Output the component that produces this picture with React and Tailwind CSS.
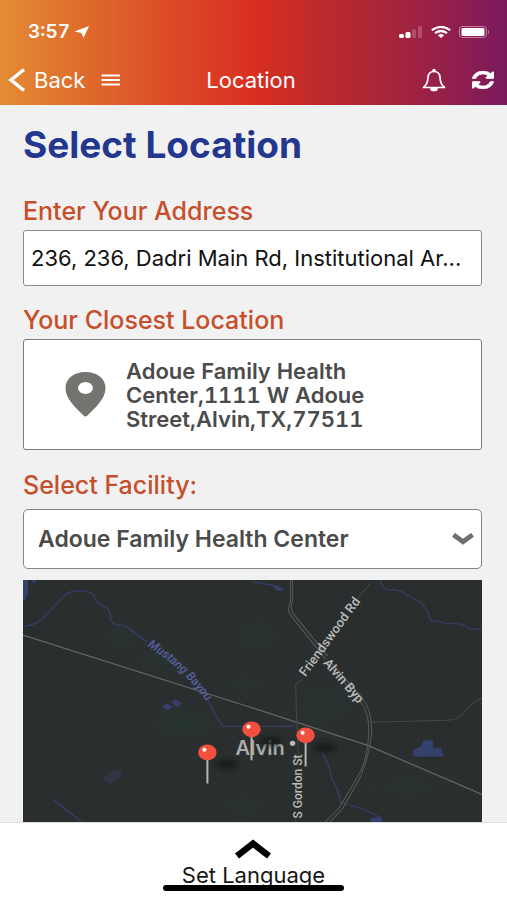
import React from "react";

const PINS = [
  { x: 184, y: 172 },
  { x: 228, y: 149 },
  { x: 282, y: 155 },
];

function StatusBar() {
  return (
    <div className="flex h-8 items-center justify-between pl-7 pr-4">
      <div className="flex items-center gap-1 text-[19px] font-semibold leading-6">
        <span className="tabular-nums">3:57</span>
        <svg className="h-3 w-4" viewBox="0 0 16 12" fill="currentColor" aria-hidden="true">
          <path d="M15 0 L9.5 12 L7.5 7 L0.500 5.500 Z" />
        </svg>
      </div>
      <div className="flex items-center gap-2">
        <svg className="h-3 w-6" viewBox="0 0 24 12" fill="currentColor" aria-hidden="true">
          <rect x="0" y="8" width="5" height="4" rx="1.500" />
          <rect x="6.500" y="6" width="5" height="6" rx="1.500" />
          <rect x="13" y="3" width="4" height="9" rx="1.500" opacity="0.200" />
          <rect x="19" y="0" width="4" height="12" rx="1.500" opacity="0.200" />
        </svg>
        <svg className="h-3 w-5" viewBox="0 0 20 12" fill="none" stroke="currentColor" aria-hidden="true">
          <path d="M0.800 4.200 Q10 -2.400 19.200 4.200" strokeWidth="2.200" />
          <path d="M4 7.200 Q10 2.800 16 7.200" strokeWidth="2.200" />
          <path d="M6.800 9.200 Q10 7 13.200 9.200 L10 12 Z" fill="currentColor" stroke="none" />
        </svg>
        <svg className="h-3 w-8" viewBox="0 0 32 12" fill="none" aria-hidden="true">
          <rect x="0.500" y="0.500" width="27" height="11" rx="3" stroke="currentColor" opacity="0.450" />
          <rect x="2.500" y="2" width="23" height="8" rx="1.500" fill="currentColor" />
          <path d="M29 4 Q31 6 29 8 Z" fill="currentColor" opacity="0.450" />
        </svg>
      </div>
    </div>
  );
}

function Header() {
  return (
    <header className="h-[105px] bg-[linear-gradient(90deg,#e48b34_0%,#df6c2c_16%,#dc4a27_34%,#da2e22_50%,#bf2a29_62%,#a5253c_78%,#8c1d50_92%,#7a1a5e_100%)] pt-4 text-white">
      <StatusBar />
      <div className="grid h-16 grid-cols-3 items-center pl-2 pr-[13px]">
        <div className="flex items-center gap-4">
          <button type="button" className="flex items-center gap-2 text-[22px] leading-6">
            <svg className="h-6 w-[18px]" viewBox="0 0 18 24" fill="none" stroke="currentColor" strokeWidth="3.500" aria-hidden="true">
              <path d="M16 1.500 L3 12 L16 22.500" />
            </svg>
            Back
          </button>
          <button type="button" aria-label="Menu">
            <svg className="h-3 w-5" viewBox="0 0 20 12" stroke="currentColor" strokeWidth="1.800" aria-hidden="true">
              <path d="M0.500 1.500H19M0.500 6H19M0.500 10.500H19" />
            </svg>
          </button>
        </div>
        <h1 className="text-center text-[22px] leading-6">Location</h1>
        <div className="flex items-center justify-end gap-[26px]">
          <button type="button" aria-label="Notifications">
            <svg className="h-6 w-6" viewBox="0 0 24 24" fill="none" stroke="currentColor" strokeWidth="1.700" strokeLinejoin="round" aria-hidden="true">
              <path d="M12 3.500C8.400 3.500 6.200 5.800 6 9.500C5.800 14.800 4.600 17 1.500 19.500H22.500C19.400 17 18.200 14.800 18 9.500C17.800 5.800 15.600 3.500 12 3.500Z" />
              <circle cx="12" cy="2.500" r="0.900" />
              <path d="M9 20.400A3 2 0 0 0 15 20.400Z" fill="currentColor" />
            </svg>
          </button>
          <button type="button" aria-label="Refresh">
            <svg className="h-[18px] w-[22px]" viewBox="0 0 1536 1536" preserveAspectRatio="none" fill="currentColor" stroke="currentColor" strokeWidth="50" aria-hidden="true">
              <path d="M1511 928q0 5-1 7-64 268-268 434.500t-478 166.500q-146 0-282.500-55t-243.500-157l-129 129q-19 19-45 19t-45-19-19-45v-448q0-26 19-45t45-19h448q26 0 45 19t19 45-19 45l-137 137q71 66 161 102t187 36q134 0 250-65t186-179q11-17 53-117 8-23 30-23h192q13 0 22.500 9.500t9.500 22.500zm25-800v448q0 26-19 45t-45 19h-448q-26 0-45-19t-19-45 19-45l138-138q-148-137-349-137-134 0-250 65t-186 179q-11 17-53 117-8 23-30 23h-199q-13 0-22.500-9.500t-9.500-22.500v-7q65-268 270-434.500t480-166.500q146 0 284 55.500t245 156.500l130-129q19-19 45-19t45 19 19 45z" />
            </svg>
          </button>
        </div>
      </div>
    </header>
  );
}

function Pin({ x, y }) {
  return (
    <g>
      <ellipse cx={x + 19} cy={y + 12} rx="11" ry="5" fill="#151718" opacity="0.700" filter="url(#shade)" />
      <path d={`M${x} ${y + 6}V${y + 31}`} stroke="#b4b6b7" strokeWidth="2" />
      <ellipse cx={x} cy={y} rx="9.200" ry="7.800" fill="#f2503f" />
      <circle cx={x - 3} cy={y - 2.500} r="2" fill="#fff" />
    </g>
  );
}

function FacilityMap() {
  return (
    <svg className="mt-[11px] block min-h-[242px] w-full flex-1 basis-0 bg-[#2b2e2f] font-['Roboto',sans-serif]" viewBox="0 0 458 242" preserveAspectRatio="xMidYMin slice" role="img" aria-label="Map of Alvin">
      <defs>
        <filter id="shade" x="-50%" y="-50%" width="200%" height="200%">
          <feGaussianBlur stdDeviation="2" />
        </filter>
        <radialGradient id="green">
          <stop offset="0" stopColor="#273532" />
          <stop offset="1" stopColor="#273532" stopOpacity="0" />
        </radialGradient>
        <path id="bayouLabel" d="M124 66 Q160 88 185 124 L192 134" />
      </defs>
      <g fill="url(#green)">
        <ellipse cx="98" cy="55" rx="22" ry="14" />
        <ellipse cx="222" cy="104" rx="24" ry="12" />
        <ellipse cx="160" cy="142" rx="42" ry="20" />
        <ellipse cx="130" cy="80" rx="50" ry="24" opacity="0.500" />
        <ellipse cx="235" cy="55" rx="50" ry="45" opacity="0.500" />
        <ellipse cx="300" cy="125" rx="60" ry="40" opacity="0.600" />
        <ellipse cx="385" cy="205" rx="60" ry="30" opacity="0.500" />
        <ellipse cx="220" cy="225" rx="50" ry="22" opacity="0.500" />
      </g>
      <g fill="none" stroke="#363e64" strokeWidth="1.300" strokeLinejoin="round">
        <path d="M2 46C10 45 15 43 19 39L42 15Q48 11 54 11Q66 10 71 15Q71 20 76 24L85 29Q88 34 87 39Q90 44 94 45Q101 44 106 49L124 62M184 118Q190 133 200 146H270M298 172Q306 184 308 198Q315 210 317 222L340 229L357 237M30 219L59 242" />
        <path d="M357 1Q358 9 365 10Q374 9 380 13L396 22Q404 29 407 41Q412 40 420 43L437 44L447 49H458M230 2L247 5L258 9" />
      </g>
      <g fill="#36406c">
        <path d="M0 0H5V14L2 20H0ZM8 0H13L11 4ZM139 126L143 123L150 127L144 130ZM148 122L152 119L159 123L154 127ZM247 4L254 6L261 10L254 11ZM389 176V169L396 167L400 160H409V168H417L420 176ZM347 242V238L357 236L359 242Z" />
        <path d="M80 198L91 189L100 191L96 198L87 204Z" fill="#303543" />
      </g>
      <g fill="none" stroke="#565b5c" strokeLinejoin="round">
        <path d="M0 55L230 128L344 165L458 214" stroke="#646868" strokeWidth="1.200" />
        <path d="M267 0V20L265 28Q264 31 267 35L302 79M304 83L335 119Q346 132 345 152Q344 180 334 196L315 228L301 242" />
        <path d="M269 0V20Q266 29 270 34L304 76M307 82L338 117Q348 129 348 151Q346 174 337 196L319 228L306 242" />
        <path d="M348 2Q338 12 330 25M279 99L272 104L273 139L275 180M272 238V242M346 142L423 140Q434 139 439 134Q447 122 458 118" stroke="#45494a" />
      </g>
      <g fill="#b9bbbb" fontSize="13" fontWeight="500">
        <text transform="translate(282 97) rotate(-54)">Friendswood Rd</text>
        <text transform="translate(299 83) rotate(49)">Alvin Byp</text>
        <text transform="translate(278 238) rotate(-90)" fontSize="12">S Gordon St</text>
      </g>
      <text fill="#5660a0" fontSize="12" fontStyle="italic" fontWeight="500">
        <textPath href="#bayouLabel">Mustang Bayou</textPath>
      </text>
      <text x="212" y="175" fill="#a9abac" fontSize="20" fontWeight="600" className="font-['Inter',sans-serif]">Alvin</text>
      <circle cx="269" cy="163" r="2.700" fill="#b9bbbb" />
      {PINS.map((pin) => (
        <Pin key={pin.x} x={pin.x} y={pin.y} />
      ))}
    </svg>
  );
}

function LocationForm() {
  return (
    <main className="flex flex-1 flex-col bg-[#f1f1f1] pl-[23px] pr-[25px] pt-5">
      <h2 className="text-[37px] font-bold leading-10 text-[#23378f]">Select Location</h2>

      <label htmlFor="address" className="mt-8 text-[25px] font-medium leading-7 text-[#c64f2b]">
        Enter Your Address
      </label>
      <input
        id="address"
        type="text"
        defaultValue="236, 236, Dadri Main Rd, Institutional Ar..."
        className="mt-[5px] h-14 w-full rounded-[3px] border border-[#8a8a8a] bg-white px-[7px] text-[22px] text-[#111111] outline-none"
      />

      <h3 className="mt-5 text-[25px] font-medium leading-7 text-[#c64f2b]">Your Closest Location</h3>
      <section className="mt-[5px] flex h-[111px] items-center gap-5 rounded-[3px] border border-[#7d7d7d] bg-white pl-[41px]">
        <svg className="h-[45px] w-[41px] shrink-0" viewBox="0 0 41 45" fill="#757370" aria-hidden="true">
          <path fillRule="evenodd" d="M20.500 0C9 0 0.500 6.500 0.500 16C0.500 27 11 36 18.500 43.500Q20.500 45.500 22.500 43.500C30 36 40.500 27 40.500 16C40.500 6.500 32 0 20.500 0ZM20.500 10A7.500 6 0 1 1 20.500 22A7.500 6 0 1 1 20.500 10Z" />
        </svg>
        <p className="w-[260px] text-[22px] font-semibold tabular-nums leading-6 text-[#4b4b4b]">
          Adoue Family Health Center,1111 W Adoue Street,Alvin,TX,77511
        </p>
      </section>

      <label htmlFor="facility" className="mt-[21px] text-[25px] font-medium leading-7 text-[#c64f2b]">
        Select Facility:
      </label>
      <div className="relative mt-[10px]">
        <select
          id="facility"
          className="h-[60px] w-full appearance-none rounded-[5px] border border-[#858585] bg-white px-[14px] text-[23px] font-semibold text-[#4b4b4b] outline-none"
        >
          <option>Adoue Family Health Center</option>
        </select>
        <svg className="pointer-events-none absolute right-2 top-6 h-3 w-[22px]" viewBox="0 0 22 12" fill="none" stroke="#6f6f6f" strokeWidth="4.800" aria-hidden="true">
          <path d="M1.500 1.800L11 8.800L20.500 1.800" />
        </svg>
      </div>

      <FacilityMap />
    </main>
  );
}

function LanguageBar() {
  return (
    <footer className="flex h-[78px] flex-col items-center border-t border-[#dddddd] bg-white pt-4">
      <button type="button" className="flex flex-col items-center text-[22px] leading-6 text-[#161616]">
        <svg className="h-5 w-9" viewBox="0 0 36 20" fill="none" stroke="#000" strokeWidth="6.500" aria-hidden="true">
          <path d="M2 17L18 4.500L34 17" />
        </svg>
        <span className="mt-1">Set Language</span>
      </button>
      <div className="-mt-[2px] h-[6px] w-[181px] rounded-full bg-black" />
    </footer>
  );
}

export default function App() {
  return (
    <div className="flex min-h-screen flex-col font-['Inter','Roboto',sans-serif]">
      <Header />
      <LocationForm />
      <LanguageBar />
    </div>
  );
}
